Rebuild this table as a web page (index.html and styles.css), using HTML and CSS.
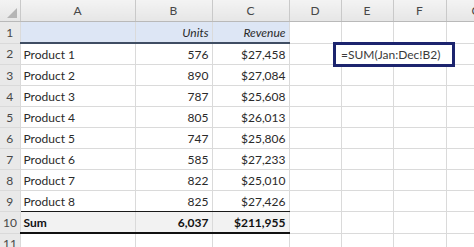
FILE: index.html
```html
<!DOCTYPE html>
<html lang="en">
<head>
    <meta charset="UTF-8">
    <title>Sum across sheets</title>
    <link rel="stylesheet" href="styles.css">
</head>
<body>
    <div class="sheet">
        <table class="grid">
            <colgroup>
                <col class="c-row">
                <col class="c-a">
                <col class="c-b">
                <col class="c-c">
                <col class="c-d">
                <col class="c-e">
                <col class="c-f">
                <col class="c-g">
            </colgroup>
            <thead>
                <tr class="col-heads">
                    <th class="corner"><span class="tri"></span></th>
                    <th>A</th><th>B</th><th>C</th><th>D</th><th>E</th><th>F</th><th>G</th>
                </tr>
            </thead>
            <tbody>
                <tr class="head-row">
                    <th>1</th>
                    <td class="blue"></td>
                    <td class="blue num it">Units</td>
                    <td class="blue num it">Revenue</td>
                    <td></td><td></td><td></td><td></td>
                </tr>
                <tr><th>2</th><td>Product 1</td><td class="num">576</td><td class="num">$27,458</td><td></td><td></td><td></td><td></td></tr>
                <tr><th>3</th><td>Product 2</td><td class="num">890</td><td class="num">$27,084</td><td></td><td></td><td></td><td></td></tr>
                <tr><th>4</th><td>Product 3</td><td class="num">787</td><td class="num">$25,608</td><td></td><td></td><td></td><td></td></tr>
                <tr><th>5</th><td>Product 4</td><td class="num">805</td><td class="num">$26,013</td><td></td><td></td><td></td><td></td></tr>
                <tr><th>6</th><td>Product 5</td><td class="num">747</td><td class="num">$25,806</td><td></td><td></td><td></td><td></td></tr>
                <tr><th>7</th><td>Product 6</td><td class="num">585</td><td class="num">$27,233</td><td></td><td></td><td></td><td></td></tr>
                <tr><th>8</th><td>Product 7</td><td class="num">822</td><td class="num">$25,010</td><td></td><td></td><td></td><td></td></tr>
                <tr class="pre-sum"><th>9</th><td>Product 8</td><td class="num">825</td><td class="num">$27,426</td><td></td><td></td><td></td><td></td></tr>
                <tr class="sum-row">
                    <th>10</th>
                    <td class="tot">Sum</td>
                    <td class="tot num">6,037</td>
                    <td class="tot num">$211,955</td>
                    <td></td><td></td><td></td><td></td>
                </tr>
                <tr><th>11</th><td></td><td></td><td></td><td></td><td></td><td></td><td></td></tr>
            </tbody>
        </table>
        <!-- formula callout sits over E2:F2 -->
        <div class="callout">=SUM(Jan:Dec!B2)</div>
    </div>
</body>
</html>
```

FILE: styles.css
```css
body {
    margin: 0;
    background: #ffffff;
    font-family: 'Lato', 'Liberation Sans', sans-serif;
    overflow: hidden;
}

.sheet {
    position: relative;
    width: 474px;
    height: 247px;
    overflow: hidden;
}

.grid {
    border-collapse: collapse;
    table-layout: fixed;
    width: 506px;
    font-size: 12px;
    color: #2a2a2a;
}

.c-row { width: 20px; }
.c-a { width: 115px; }
.c-b { width: 77px; }
.c-c { width: 77px; }
.c-d { width: 52px; }
.c-e { width: 52px; }
.c-f { width: 53px; }
.c-g { width: 60px; }

.grid td,
.grid th {
    padding: 0 3px;
    height: 20px;
    border-right: 1px solid #dadada;
    border-bottom: 1px solid #dadada;
    white-space: nowrap;
    overflow: hidden;
}

/* column letters */
.col-heads th {
    height: 21px;
    background: linear-gradient(#f3f3f3, #e6e6e6);
    color: #474747;
    font-weight: normal;
    text-align: center;
    border-right: 1px solid #c9c9c9;
    border-bottom: 1px solid #b9b9b9;
}

.corner {
    position: relative;
}

.tri {
    position: absolute;
    right: 3px;
    bottom: 3px;
    width: 0;
    height: 0;
    border-left: 10px solid transparent;
    border-bottom: 10px solid #b5b5b5;
}

/* row numbers */
tbody th {
    padding: 0;
    background: #e9e9e9;
    color: #474747;
    font-weight: normal;
    text-align: center;
    border-right: 1px solid #b9b9b9;
    border-bottom: 1px solid #d2d2d2;
}

.num {
    text-align: right;
}

.it {
    font-style: italic;
}

.blue {
    background: #dde6f5;
}

.head-row .blue {
    border-bottom: 2px solid #3f4d63;
}

.pre-sum td:nth-child(-n+4) {
    border-bottom: 1px solid #1a1a1a;
}

.tot {
    background: #f2f2f2;
    font-weight: bold;
    color: #111;
    border-top: 1px solid #1a1a1a;
}

.sum-row .tot {
    border-bottom: 2px solid #111;
}

.callout {
    position: absolute;
    left: 333px;
    top: 42px;
    width: 111px;
    height: 19px;
    border: 3px solid #1c246e;
    padding-left: 5px;
    font-size: 12px;
    line-height: 19px;
    color: #3a3a3a;
    background: #ffffff;
    white-space: nowrap;
}
```
